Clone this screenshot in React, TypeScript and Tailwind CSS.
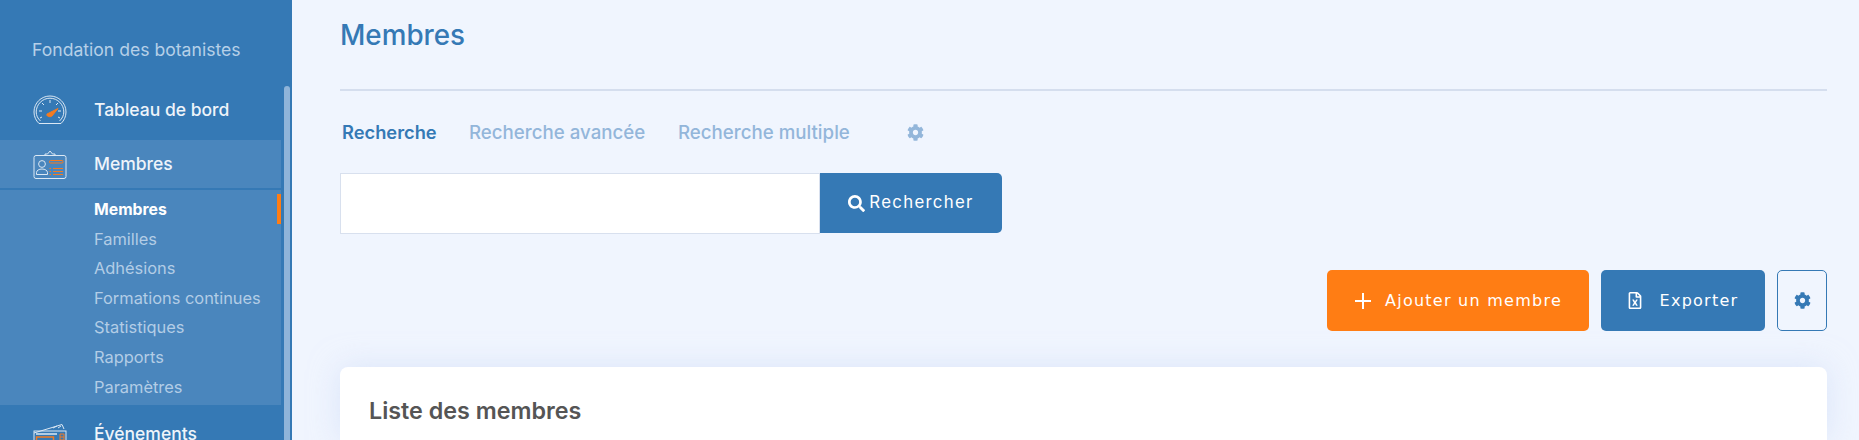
import { FaCog, FaSearch, FaRegFileExcel } from "react-icons/fa";

const subItems = ["Familles", "Adhésions", "Formations continues", "Statistiques", "Rapports", "Paramètres"];

function Gauge() {
  return (
    <svg width="34" height="30" viewBox="0 0 34 30" fill="none" stroke="#dbe8f4" strokeWidth="1">
      <path d="M6 28.5 C2.8 25.5 1 21.5 1 17 C1 8 8.2 1 17 1 C25.8 1 33 8 33 17 C33 21.5 31.2 25.5 28 28.5 Z" />
      <path d="M7.5 26 C4.8 23.5 3.2 20.5 3.2 17 C3.2 9.4 9.4 3.2 17 3.2 C24.6 3.2 30.8 9.4 30.8 17 C30.8 20.5 29.2 23.5 26.5 26" />
      <path d="M17 5v3M9 8l2 2M25 8l-2 2M6 16h3M28 16h-3M7 23l2-1M27 23l-2-1" />
      <path d="M14 19 L25 13.5 L19 21 C17 22.5 13 21.5 14 19 Z" fill="#f47b20" stroke="#f47b20" />
    </svg>
  );
}

function Badge() {
  return (
    <svg width="34" height="29" viewBox="0 0 34 29" fill="none" stroke="#dbe8f4" strokeWidth="1">
      <rect x="1" y="5.5" width="32" height="23" rx="2" />
      <path d="M12 5.5 V4 H14.5 L17 1 L19.5 4 H22 V5.5" />
      <circle cx="9" cy="14" r="3.4" />
      <path d="M3.5 24.5 V22.5 C3.5 20.5 6 19 9 19 C12 19 14.5 20.5 14.5 22.5 V24.5 Z" />
      <rect x="16.5" y="10.5" width="13.5" height="2.5" rx="1" stroke="#f47b20" />
      <path d="M16.5 18.5 H18 M20 18.5 H30 M16.5 21.5 H18 M20 21.5 H30 M16.5 24.5 H18 M20 24.5 H30" stroke="#f47b20" />
    </svg>
  );
}

function Ticket() {
  return (
    <svg width="34" height="30" viewBox="0 0 34 30" fill="none" stroke="#dbe8f4" strokeWidth="1" className="mt-[8px]">
      <path d="M1 10 L29 1.5 L31 6" />
      <path d="M20 5 L24 3 M25 5 L28 3" />
      <rect x="1" y="8" width="32" height="22" />
      <path d="M3 11 H24" strokeWidth="1.5" />
      <rect x="3.5" y="14" width="17" height="14" stroke="#f47b20" strokeWidth="1.5" />
      <path d="M27 11 H31 V24 H27 Z M27 14 H31 M27 17 H31 M27 20 H31" stroke="#f47b20" />
    </svg>
  );
}

function NavRow({ icon, label, active, tall }: { icon: React.ReactNode; label: string; active?: boolean; tall?: boolean }) {
  return (
    <div className={`flex items-center pl-[33px] text-[17.5px] font-medium text-[#eef4fa] ${active ? "h-[48px] bg-[#4a86bd]" : tall ? "h-[58px]" : "h-[54px]"}`}>
      <div className="flex w-[61px] shrink-0 items-center">{icon}</div>
      <span>{label}</span>
    </div>
  );
}

export default function App() {
  return (
    <div className="flex h-[440px] w-[1859px] overflow-hidden bg-[#f0f5fe] font-['Inter','Noto_Sans',sans-serif]">
      <aside className="relative h-[440px] w-[292px] shrink-0 overflow-hidden bg-[#3579b5]">
        <div className="flex h-[83px] items-start pl-[32px] pt-[38px] text-[17.6px] leading-[24px] text-[#b6d0e8]">
          Fondation des botanistes
        </div>
        <div className="w-[281px]">
          <NavRow icon={<Gauge />} label="Tableau de bord" />
          <div className="mt-[3px]">
            <NavRow active icon={<Badge />} label="Membres" />
          </div>
          <div className="mt-[2px] bg-[#4a86bd] pb-[3px] pl-[94px] pt-[5px] text-[16.4px] leading-[29.6px] text-[#b3cde6]">
            <div className="relative text-[15.8px] font-bold text-white">
              Membres
              <span className="absolute -top-[1px] right-0 h-[30px] w-[4px] bg-[#ff7d14]" />
            </div>
            {subItems.map((s) => (
              <div key={s}>{s}</div>
            ))}
          </div>
          <NavRow tall icon={<Ticket />} label="Événements" />
        </div>
        <div className="absolute left-[284px] top-[86px] h-[354px] w-[6px] rounded-t-full bg-[#8fb4d9]" />
      </aside>

      <main className="flex min-w-0 flex-1 flex-col pl-[48px] pr-[32px]">
        <h1 className="flex h-[72px] items-center text-[27.8px] font-medium text-[#3579b5]">Membres</h1>
        <div className="mt-[17px] h-[2px] bg-[#d5deee]" />
        <nav className="mt-[30px] flex h-[24px] items-center pl-[2px] text-[18.7px] font-medium text-[#93b6da]">
          <span className="w-[127px] text-[18.3px] font-semibold text-[#3579b5]">Recherche</span>
          <span className="w-[209px]">Recherche avancée</span>
          <span className="w-[229px]">Recherche multiple</span>
          <FaCog className="-mt-[2px] h-[17px] w-[17px]" />
        </nav>
        <div className="mt-[28px] flex h-[61px]">
          <div className="h-[61px] w-[480px] border border-[#d8e0ee] bg-white" />
          <button className="flex h-[60px] w-[182px] items-center justify-center gap-[4px] rounded-r-[5px] bg-[#3579b5] text-[16.8px] tracking-[1.3px] text-white">
            <FaSearch className="h-[17px] w-[17px]" />
            Rechercher
          </button>
        </div>
        <div className="mt-[36px] flex justify-end gap-[12px] font-['DejaVu_Sans',sans-serif] text-[16px] tracking-[1.25px] text-white">
          <button className="flex h-[61px] w-[262px] items-center justify-center gap-[13px] rounded-[5px] bg-[#ff7d14]">
            <svg width="18" height="18" viewBox="0 0 18 18" stroke="white" strokeWidth="2"><path d="M9 1v16M1 9h16" /></svg>
            Ajouter un membre
          </button>
          <button className="flex h-[61px] w-[164px] items-center justify-center gap-[18px] rounded-[5px] bg-[#3579b5]">
            <FaRegFileExcel className="h-[17px] w-[14px]" />
            Exporter
          </button>
          <button className="flex h-[61px] w-[50px] items-center justify-center rounded-[5px] border border-[#3579b5]">
            <FaCog className="h-[17px] w-[17px] text-[#3579b5]" />
          </button>
        </div>
        <section className="mt-[36px] flex-1 rounded-t-[8px] bg-white pl-[29px] pt-[27px] shadow-[0_0_30px_rgba(200,215,245,0.55)]">
          <h2 className="text-[23.3px] font-semibold leading-[33px] text-[#555555]">Liste des membres</h2>
        </section>
      </main>
    </div>
  );
}
